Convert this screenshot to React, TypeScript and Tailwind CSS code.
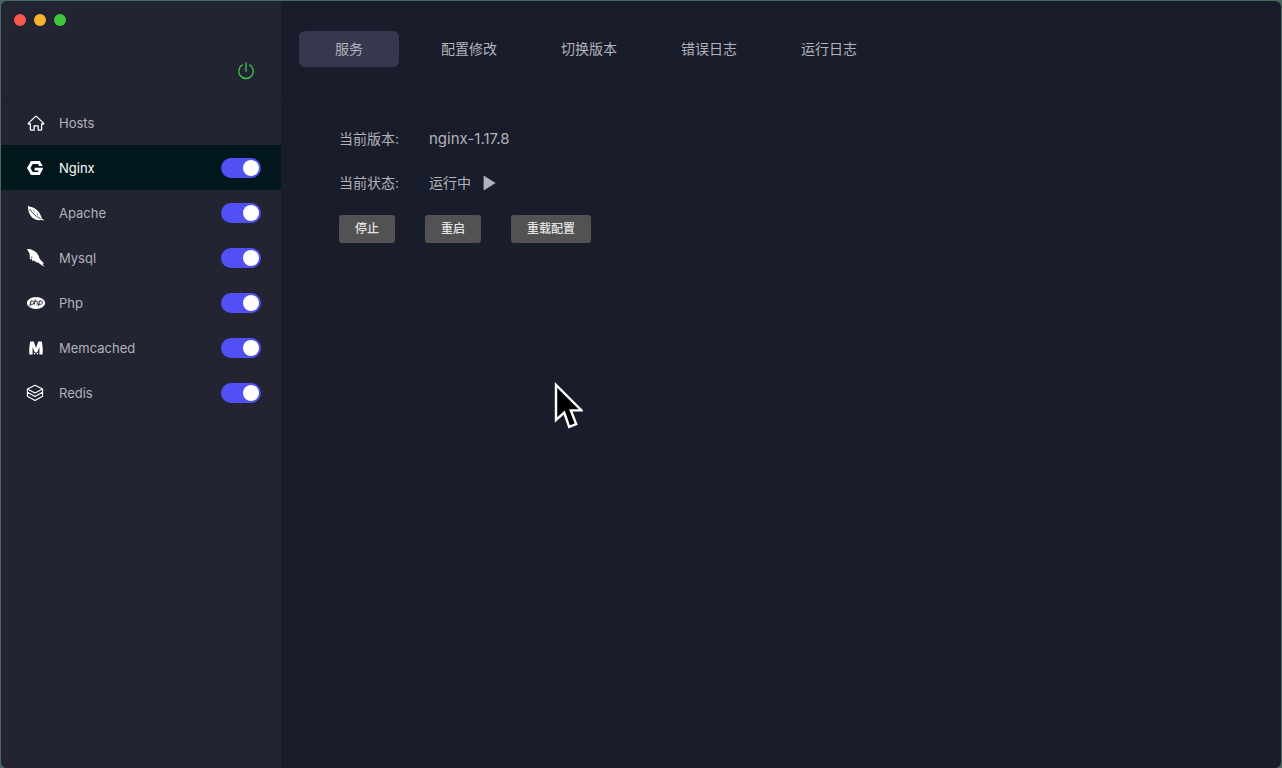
import { useState } from "react";
import type { ReactNode } from "react";
import clsx from "clsx";

interface Service {
  name: string;
  icon: ReactNode;
  switchable: boolean;
}

const services: Service[] = [
  {
    name: "Hosts",
    switchable: false,
    icon: (
      <g fill="none" stroke="currentColor" strokeWidth="1.3" strokeLinecap="round" strokeLinejoin="round">
        <path d="M4.400 11H2.700q-.8-.2-.2-.9L9.300 3.600q.7-.6 1.400 0l6.800 6.500q.6.700-.2.900h-1.700v5.200q0 1-1 1h-2.400v-4.300H8.100v4.300H5.400q-1 0-1-1z" />
      </g>
    ),
  },
  {
    name: "Nginx",
    switchable: true,
    icon: (
      <path
        d="M5 3.100h8.800L16.700 8h-3.600l-1.100-1.900H6.700L4.500 10l2.200 3.900h5.200l.9-1.500H8.600V9.800h8.300v1.300L13.700 16.900H5L1 10z"
        fill="currentColor"
      />
    ),
  },
  {
    name: "Apache",
    switchable: true,
    icon: (
      <>
        <path
          d="M2 2c.3 1 1 1.500 2 1.700 3.200.5 6.200 2.200 8.400 4.800 1.900 2.300 2.900 5 3.600 7.200l2.600 1.800-3.700-.4c-3.300.4-6.500-.4-9-2.800C2.900 11.300 1.800 7 2 2z"
          fill="currentColor"
        />
        <path d="M3.600 6c2.800 4 6.400 7.600 11.200 9.800" fill="none" stroke="#222431" strokeWidth=".8" />
        <path d="M7.800 6.400l.5 3M11.200 9.400l.4 3.200" fill="none" stroke="#222431" strokeWidth=".4" />
      </>
    ),
  },
  {
    name: "Mysql",
    switchable: true,
    icon: (
      <>
        <path
          d="M1 1.300c1.600-.7 3.700-.2 5.200.7 3.100.9 5.400 3.300 6.500 6.100.7 2.200 1.400 4 3 5l2.400 2.400-1.800.2 2.200 2.800c-2-.7-4.100-2.100-5.800-3.600-1.900-.3-3.700-1.200-5-2.700l-.9 1.200c-.7-.8-.9-1.800-.8-2.900l-1.600 1.200C3.500 9.900 3.700 7.700 3.600 6 3.300 4.300 1.900 3.200 1 1.300z"
          fill="currentColor"
        />
        <path d="M5 8.400l.7 1.700.7-1.100" fill="none" stroke="#222431" strokeWidth=".6" />
      </>
    ),
  },
  {
    name: "Php",
    switchable: true,
    icon: (
      <>
        <ellipse cx="10" cy="10" rx="9.200" ry="6" fill="currentColor" />
        <g fill="none" stroke="#222431" strokeWidth="1">
          <path d="M3.800 13.200 5 8h1.500c2.400 0 1.700 3.300-.6 3.300H4.400" />
          <path d="M9.300 6.400 8.200 11.700M9 8.200h1.400c1.200 0 1.200.7 1 1.400l-.4 2.100" />
          <path d="M12.300 13.200 13.500 8H15c2.400 0 1.700 3.300-.6 3.300h-1.500" />
        </g>
      </>
    ),
  },
  {
    name: "Memcached",
    switchable: true,
    icon: (
      <>
        <path
          d="M3.400 16.600c-.4-4.400-.1-8.800.9-13.200h3.500L10 10l2.200-6.600h3.500c1 4.400 1.300 8.800.9 13.200h-3.200V9l-2.200 5.400H8.800L6.600 9v7.600z"
          fill="currentColor"
        />
        <circle cx="8.500" cy="15.800" r=".8" fill="currentColor" />
        <circle cx="11.500" cy="15.800" r=".8" fill="currentColor" />
      </>
    ),
  },
  {
    name: "Redis",
    switchable: true,
    icon: (
      <g fill="none" stroke="currentColor" strokeWidth="1.100" strokeLinejoin="round">
        <path d="M9 2.200 1.400 6.100 9 10l7.600-3.900z" />
        <path d="M1.400 6.100v3.200L9 13.400l7.600-4.100V6.100M1.400 9.300v3.900L9 17.400l7.600-4.200V9.300" />
      </g>
    ),
  },
];

const tabs = ["服务", "配置修改", "切换版本", "错误日志", "运行日志"];

const actions = ["停止", "重启", "重载配置"];

const PowerIcon = () => (
  <svg viewBox="0 0 18 18" className="size-[18px]" fill="none" stroke="currentColor" strokeWidth="1.4">
    <path d="M5.800 2.600a7.300 7.300 0 1 0 6.400 0M9 .4v9.400" />
  </svg>
);

const Pointer = () => (
  <svg
    viewBox="0 0 30 48"
    className="pointer-events-none absolute left-[553px] top-[381px] h-[48px] w-[30px]"
    aria-hidden="true"
  >
    <path
      d="M3 4v35l8.200-7.400 5 14.200 7-2.800-5.400-13.600H28.500z"
      fill="#000"
      stroke="#fff"
      strokeWidth="2.400"
    />
  </svg>
);

const Sidebar = () => {
  const [current, setCurrent] = useState("Nginx");

  return (
    <aside className="w-[280px] shrink-0 bg-[#222431]">
      <div className="flex h-[99px] flex-col justify-between border-b border-[#1d1f2b] pt-[13px] pr-[26px] pb-[19px] pl-[13px]">
        <div className="flex gap-2">
          <button aria-label="Close" className="size-3 rounded-full bg-[#fa5650]" />
          <button aria-label="Minimize" className="size-3 rounded-full bg-[#f9b42d]" />
          <button aria-label="Zoom" className="size-3 rounded-full bg-[#40c53b]" />
        </div>
        <button aria-label="Power" className="self-end text-[#3fbf45]">
          <PowerIcon />
        </button>
      </div>
      <ul className="text-[13px] leading-5">
        {services.map((service) => (
          <li
            key={service.name}
            className={clsx(
              "flex h-[45px] items-center pr-5 pl-[25px]",
              current === service.name ? "bg-[#01171c] text-white" : "text-[#b2b3bb]"
            )}
          >
            <button
              onClick={() => setCurrent(service.name)}
              className="flex h-full flex-1 items-center gap-[13px] text-left"
            >
              <svg viewBox="0 0 20 20" className="size-5 text-white">
                {service.icon}
              </svg>
              {service.name}
            </button>
            {service.switchable && (
              <input
                type="checkbox"
                role="switch"
                defaultChecked
                aria-label={service.name}
                className="h-5 w-10 cursor-pointer appearance-none rounded-full bg-[#4c4d4f] p-0.5 before:block before:size-4 before:rounded-full before:bg-white checked:bg-[#5050f5] checked:before:translate-x-5"
              />
            )}
          </li>
        ))}
      </ul>
    </aside>
  );
};

const App = () => {
  const [tab, setTab] = useState(tabs[0]);

  return (
    <div className="relative min-h-screen bg-[#48675f] pt-px pr-px pl-px font-['Inter','Noto_Sans_CJK_SC',sans-serif] text-sm text-[#b2b3bb]">
      <div className="flex min-h-[calc(100vh-1px)] overflow-hidden rounded-md bg-[#191c2a]">
        <Sidebar />
        <main className="flex-1 px-[18px] pt-[30px]">
          <nav className="flex gap-5">
            {tabs.map((label) => (
              <button
                key={label}
                onClick={() => setTab(label)}
                className={clsx("h-9 w-[100px] rounded-md", tab === label && "bg-[#37384d]")}
              >
                {label}
              </button>
            ))}
          </nav>
          <section className="px-10 pt-[50px]">
            <dl className="grid grid-cols-[90px_1fr]">
              <dt className="flex h-11 items-center">当前版本:</dt>
              <dd className="flex h-11 items-center text-[15px]">nginx-1.17.8</dd>
              <dt className="flex h-11 items-center">当前状态:</dt>
              <dd className="flex h-11 items-center gap-3">
                运行中
                <svg viewBox="0 0 13 16" className="h-4 w-[13px]" fill="currentColor">
                  <path d="M.600.600 12.600 8 .600 15.400z" />
                </svg>
              </dd>
            </dl>
            <div className="mt-2.5 flex gap-[30px]">
              {actions.map((label) => (
                <button
                  key={label}
                  className="h-7 rounded-[3px] bg-[#525252] px-4 text-xs font-medium text-[#e4e4e4]"
                >
                  {label}
                </button>
              ))}
            </div>
          </section>
        </main>
      </div>
      <Pointer />
    </div>
  );
};

export default App;
